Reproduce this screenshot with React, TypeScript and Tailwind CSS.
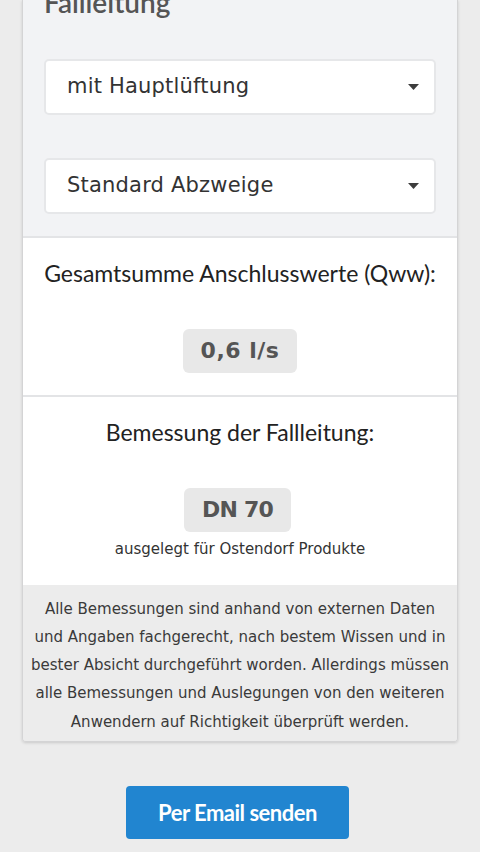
import React from "react";

// Auswahlfeld mit kleinem Dreieck rechts
function SelectBox({ label }: { label: string }) {
  return (
    <div className="flex h-[56px] items-center justify-between rounded-[5px] border-2 border-[#e6e7e9] bg-white pl-[21px] pr-[15px]">
      <span className="text-[21px] tracking-[0.2px] text-[#333]" style={{ fontFamily: '"DejaVu Sans", Verdana, sans-serif' }}>
        {label}
      </span>
      <svg width="11" height="6" viewBox="0 0 11 6">
        <path d="M0 0 L11 0 L5.5 6 Z" fill="#3d3d3d" />
      </svg>
    </div>
  );
}

function Badge({ children, tight }: { children: React.ReactNode; tight?: boolean }) {
  return (
    <div
      className={
        "inline-flex h-[44px] items-center rounded-[6px] bg-[#e8e8e8] px-[18px] text-[22px] font-bold text-[#555] " +
        (tight ? "tracking-[-0.8px]" : "tracking-[0.5px]")
      }
      style={{ fontFamily: '"DejaVu Sans", Verdana, sans-serif' }}
    >
      {children}
    </div>
  );
}

export default function App() {
  const lato = { fontFamily: "Lato, sans-serif" };
  const verdana = { fontFamily: '"DejaVu Sans", Verdana, sans-serif' };

  return (
    <div className="h-[852px] overflow-hidden bg-[#ececec]">
      <div className="mx-[22px] overflow-hidden rounded-b-[4px] border border-t-0 border-[#d4d4d5] shadow-[0_1px_3px_rgba(0,0,0,0.15)]">
        {/* Auswahl */}
        <div className="bg-[#f2f3f5] px-[21px] pb-[22px]">
          <h2 className="mt-[-14px] text-[28px] font-semibold leading-[1.2] text-[#555]" style={lato}>
            Fallleitung
          </h2>
          <div className="mt-[39px]">
            <SelectBox label="mit Hauptlüftung" />
          </div>
          <div className="mt-[43px]">
            <SelectBox label="Standard Abzweige" />
          </div>
        </div>

        {/* Anschlusswerte */}
        <div className="flex flex-col items-center border-t-2 border-[#e3e4e6] bg-white pb-[22px] pt-[22px]">
          <h3 className="text-[23px] leading-[27px] text-[#222]" style={lato}>
            Gesamtsumme Anschlusswerte (Qww):
          </h3>
          <div className="mt-[42px]">
            <Badge>0,6 l/s</Badge>
          </div>
        </div>

        {/* Bemessung */}
        <div className="flex flex-col items-center border-t-2 border-[#e3e4e6] bg-white pb-[26px] pt-[22px]">
          <h3 className="text-[23px] leading-[27px] text-[#222]" style={lato}>
            Bemessung der Fallleitung:
          </h3>
          <div className="mt-[42px] pr-[5px]">
            <Badge tight>DN 70</Badge>
          </div>
          <p className="mt-[7px] text-[15px] leading-[20px] text-[#333]" style={verdana}>
            ausgelegt für Ostendorf Produkte
          </p>
        </div>

        {/* Hinweis */}
        <div className="bg-[#ececec] px-[7px] pb-[5px] pt-[10px] text-center text-[15px] leading-[28.3px] text-[#3a3a3a]" style={verdana}>
          Alle Bemessungen sind anhand von externen Daten und Angaben fachgerecht, nach bestem Wissen und in bester Absicht durchgeführt worden. Allerdings müssen alle Bemessungen und Auslegungen von den weiteren Anwendern auf Richtigkeit überprüft werden.
        </div>
      </div>

      <div className="mt-[44px] flex">
        <button className="ml-[126px] h-[53px] w-[223px] rounded-[4px] bg-[#2185d0] text-[22px] font-bold tracking-[-0.5px] text-white" style={lato}>
          Per Email senden
        </button>
      </div>
    </div>
  );
}
